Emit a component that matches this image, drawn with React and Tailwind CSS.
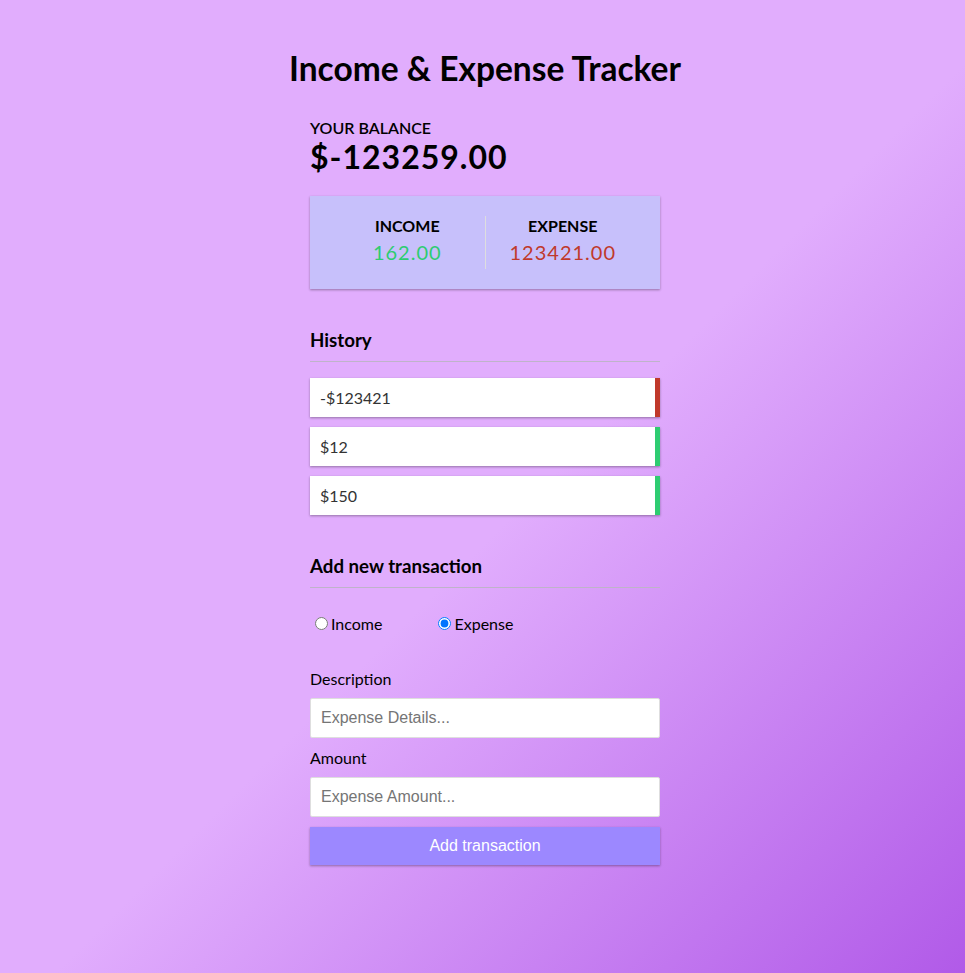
import { useState } from 'react';

const transactions = [
    { id: 1, text: '-$123421', type: 'expense' },
    { id: 2, text: '$12', type: 'income' },
    { id: 3, text: '$150', type: 'income' },
];

export default function App() {
    const [kind, setKind] = useState('expense');

    return (
        <div className="min-h-screen bg-[linear-gradient(135deg,#e1adfd_53%,#b15ae8)] pl-[5px] font-['Lato',sans-serif] text-black">
            <div className="mx-auto w-[350px] pt-[48px] pb-[108px]">
                <h2 className="-mx-[60px] whitespace-nowrap text-center text-[33.5px] font-bold leading-[40px]">
                    Income &amp; Expense Tracker
                </h2>

                <h4 className="mt-[30px] text-base font-semibold uppercase leading-[19px]">Your Balance</h4>
                <h1 className="mt-[1px] text-[32px] font-bold leading-[38px] tracking-[1px]">$-123259.00</h1>

                {/* Income / expense summary */}
                <div className="mt-[20px] flex bg-[#c7c0fb] p-[20px] shadow-[0_1px_3px_rgba(0,0,0,0.12),0_1px_2px_rgba(0,0,0,0.24)]">
                    <div className="flex-1 border-r border-[#dedede] text-center">
                        <h4 className="text-base font-bold uppercase leading-[19px]">Income</h4>
                        <p className="my-[5px] text-[20px] leading-[24px] tracking-[1px] text-[#2ecc71]">162.00</p>
                    </div>
                    <div className="flex-1 text-center">
                        <h4 className="text-base font-bold uppercase leading-[19px]">Expense</h4>
                        <p className="my-[5px] text-[20px] leading-[24px] tracking-[1px] text-[#c0392b]">123421.00</p>
                    </div>
                </div>

                <h3 className="mt-[40px] border-b border-[#bfb3c9] pb-[10px] text-[18.72px] font-bold leading-[22px]">History</h3>
                <ul className="mt-[16px] flex flex-col gap-[10px]">
                    {transactions.map((t) => (
                        <li
                            key={t.id}
                            className={`flex justify-between bg-white p-[10px] text-base leading-[19px] text-[#333] shadow-[0_1px_3px_rgba(0,0,0,0.12),0_1px_2px_rgba(0,0,0,0.24)] border-r-[5px] ${t.type === 'expense' ? 'border-[#c0392b]' : 'border-[#2ecc71]'}`}
                        >
                            <span>{t.text}</span>
                        </li>
                    ))}
                </ul>

                <h3 className="mt-[40px] border-b border-[#bfb3c9] pb-[10px] text-[18.72px] font-bold leading-[22px]">Add new transaction</h3>

                <div className="mt-[26px] flex items-center text-base leading-[19px]">
                    <label className="flex items-center">
                        <input
                            type="radio"
                            name="kind"
                            checked={kind === 'income'}
                            onChange={() => setKind('income')}
                            className="ml-[5px] mr-[3px] h-[13px] w-[13px]"
                        />
                        Income
                    </label>
                    <label className="ml-[51px] flex items-center">
                        <input
                            type="radio"
                            name="kind"
                            checked={kind === 'expense'}
                            onChange={() => setKind('expense')}
                            className="ml-[5px] mr-[3px] h-[13px] w-[13px]"
                        />
                        Expense
                    </label>
                </div>

                <label className="mt-[36px] block text-base leading-[19px]">Description</label>
                <input
                    type="text"
                    placeholder="Expense Details..."
                    className="mt-[10px] block w-full rounded-[2px] border border-[#dedede] bg-white p-[10px] font-['Liberation_Sans',Arial,sans-serif] text-base leading-[18px] placeholder:text-[#757575]"
                />

                <label className="mt-[10px] block text-base leading-[19px]">Amount</label>
                <input
                    type="number"
                    placeholder="Expense Amount..."
                    className="mt-[10px] block w-full rounded-[2px] border border-[#dedede] bg-white p-[10px] font-['Liberation_Sans',Arial,sans-serif] text-base leading-[18px] placeholder:text-[#757575]"
                />

                <button className="mt-[10px] block w-full bg-[#9c88ff] p-[10px] font-['Liberation_Sans',Arial,sans-serif] text-base leading-[18px] text-white shadow-[0_1px_3px_rgba(0,0,0,0.12),0_1px_2px_rgba(0,0,0,0.24)]">
                    Add transaction
                </button>
            </div>
        </div>
    );
}
